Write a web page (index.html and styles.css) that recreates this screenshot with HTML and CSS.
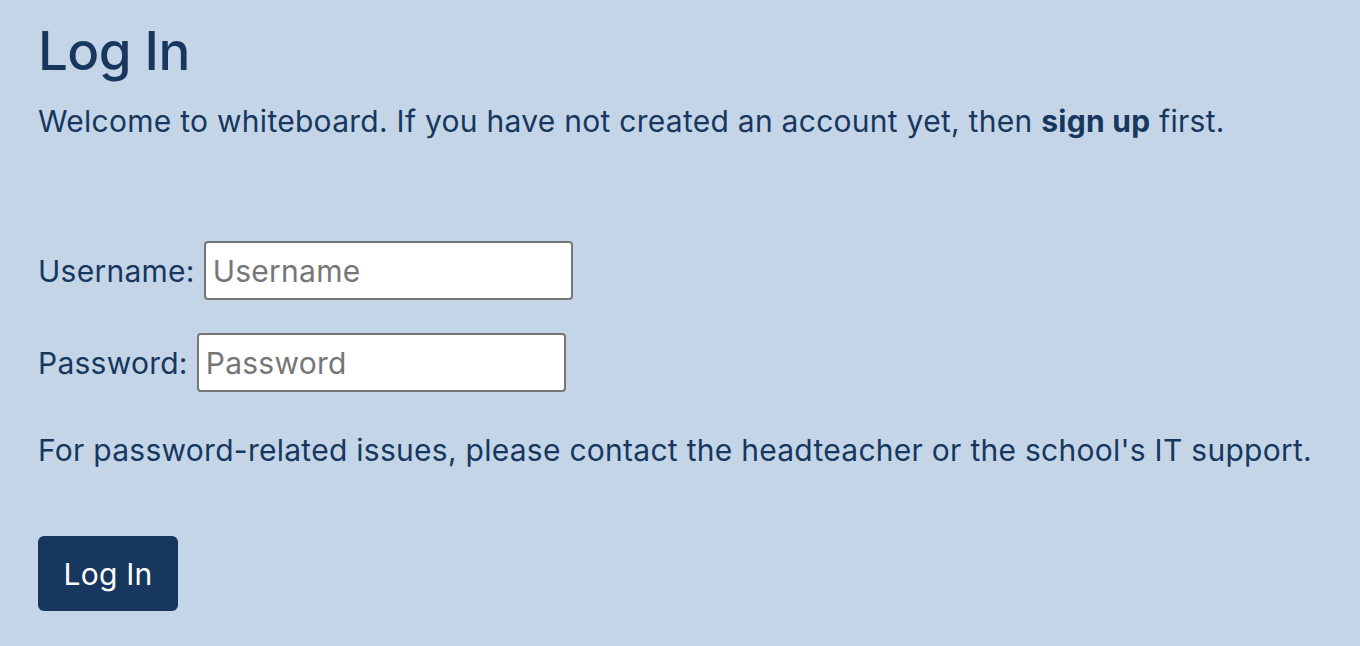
FILE: index.html
```html
<!DOCTYPE html>
<html lang="en">
<head>
<meta charset="utf-8">
<title>Log In</title>
<link rel="stylesheet" href="styles.css">
</head>
<body>
<main class="page">
  <h1 class="title">Log In</h1>
  <p class="intro">Welcome to whiteboard. If you have not created an account yet, then <strong>sign up</strong> first.</p>
  <form class="form">
    <div class="field">
      <label for="username">Username:</label>
      <input id="username" type="text" placeholder="Username">
    </div>
    <div class="field">
      <label for="password">Password:</label>
      <input id="password" type="password" placeholder="Password">
    </div>
    <p class="note">For password-related issues, please contact the headteacher or the school's IT support.</p>
    <button type="button" class="btn">Log In</button>
  </form>
</main>
</body>
</html>
```
FILE: styles.css
```css
html, body {
  margin: 0;
  padding: 0;
  background: #c4d5e8;
}
body {
  font-family: Inter, "Noto Sans", sans-serif;
  color: #17375e;
}
.page {
  padding: 19px 38px 0;
}
.title {
  margin: 0;
  font-size: 53px;
  font-weight: 500;
  line-height: 64px;
  letter-spacing: -0.6px;
}
.intro {
  margin: 18px 0 0;
  font-size: 30px;
  letter-spacing: 0.27px;
  line-height: 40px;
}
.form {
  margin-top: 100px;
}
.field {
  display: flex;
  align-items: center;
  gap: 9px;
  margin-bottom: 33px;
  font-size: 30px;
  letter-spacing: 0.25px;
}
.field input {
  width: 369px;
  height: 59px;
  box-sizing: border-box;
  border: 2px solid #767676;
  border-radius: 4px;
  padding: 0 7px;
  font-family: inherit;
  font-size: 30px;
  letter-spacing: 0.25px;
  color: #222;
  background: #fff;
}
.field input::placeholder {
  color: #767676;
}
.note {
  margin: 0;
  padding-top: 5px;
  font-size: 30px;
  letter-spacing: 0.27px;
  line-height: 40px;
}
.btn {
  margin-top: 66px;
  width: 140px;
  height: 75px;
  border: none;
  border-radius: 6px;
  background: #17375e;
  color: #fff;
  font-family: inherit;
  font-size: 30px;
  letter-spacing: 0.25px;
  padding: 0;
}
```
